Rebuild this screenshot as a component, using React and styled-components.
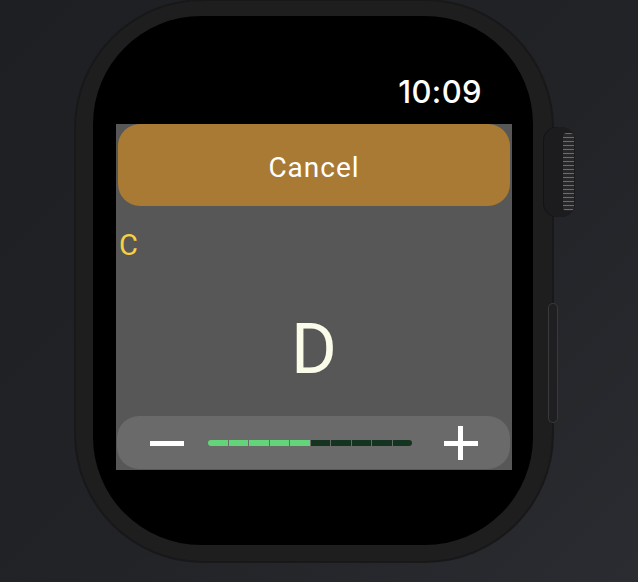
import React from 'react'
import styled, { createGlobalStyle } from 'styled-components'

const GlobalStyle = createGlobalStyle`
  html, body {
    margin: 0;
    padding: 0;
    background: #1f2023;
  }
  body {
    width: 638px;
    height: 582px;
    overflow: hidden;
    background: linear-gradient(135deg, #1e1f22 0%, #222327 55%, #2b2c31 100%);
    font-family: Roboto, "Liberation Sans", sans-serif;
  }
`

const Stage = styled.div`
  width: 638px;
  height: 582px;
  padding-left: 75px;
  box-sizing: border-box;
`

const Watch = styled.div`
  position: relative;
  width: 478px;
  height: 562px;
`

const Case = styled.div`
  width: 100%;
  height: 100%;
  box-sizing: border-box;
  padding: 16px 20px 17px 18px;
  border-radius: 128px;
  background: #1e1e1f;
  box-shadow: inset 0 0 0 1px #18181a, 0 0 0 1px #19191b;
`

const Screen = styled.div`
  width: 440px;
  height: 529px;
  border-radius: 108px;
  background: #000;
  display: flex;
  flex-direction: column;
  overflow: hidden;
`

const StatusBar = styled.div`
  height: 108px;
  display: flex;
  justify-content: flex-end;
  align-items: flex-start;
  padding: 60px 51px 0 0;
  box-sizing: border-box;
`

const Time = styled.span`
  font-family: Inter, Roboto, sans-serif;
  font-weight: 500;
  font-size: 31px;
  line-height: 1;
  color: #ffffff;
  letter-spacing: 0.4px;
`

const Content = styled.div`
  margin-left: 23px;
  width: 396px;
  height: 346px;
  background: #575757;
  display: flex;
  flex-direction: column;
  overflow: hidden;
`

const CancelButton = styled.button`
  margin: 0 2px;
  height: 82px;
  border: none;
  border-radius: 22px;
  background: #a97a34;
  color: #ffffff;
  font-family: Roboto, sans-serif;
  font-size: 28px;
  letter-spacing: 1px;
  padding: 5px 0 0;
  cursor: pointer;
`

const NoteLabel = styled.div`
  margin: 23px 0 0 3px;
  height: 32px;
  font-family: Roboto, sans-serif;
  font-size: 29px;
  line-height: 32px;
  color: ${p => p.color};
`

const BigNote = styled.div`
  flex: 1;
  display: flex;
  justify-content: center;
  align-items: center;
  padding-top: 20px;
  font-family: Roboto, sans-serif;
  font-size: 70px;
  color: #fbfbea;
`

const Controls = styled.div`
  margin: 0 2px 1px 1px;
  height: 53px;
  border-radius: 22px;
  background: #6a6a6a;
  display: flex;
  align-items: center;
  padding-left: 33px;
`

const Meter = styled.div`
  width: 204px;
  height: 6px;
  margin: 0 32px 0 24px;
  display: flex;
  gap: 1px;
  border-radius: 3px;
  overflow: hidden;
`

const Segment = styled.div`
  flex: 1;
  background: ${p => (p.on ? '#63d47a' : '#143420')};
`

const IconButton = styled.div`
  width: 34px;
  height: 34px;
  display: flex;
  align-items: center;
  justify-content: center;
`

const Crown = styled.div`
  position: absolute;
  left: 468px;
  top: 127px;
  width: 32px;
  height: 90px;
  border-radius: 14px;
  background: #1c1c1e;
  box-shadow: inset 1px 0 0 #141415;
  overflow: hidden;
  display: flex;
  justify-content: flex-end;
`

const Ridges = styled.div`
  width: 11px;
  margin: 6px 1px;
  background: repeating-linear-gradient(
    to bottom,
    #7a7a7c 0px,
    #7a7a7c 1.5px,
    #2a2a2c 1.5px,
    #2a2a2c 4px
  );
  border-radius: 4px;
  opacity: 0.85;
`

const SideButton = styled.div`
  position: absolute;
  left: 473px;
  top: 303px;
  width: 10px;
  height: 120px;
  border-radius: 6px;
  background: #1f1f21;
  box-shadow: inset 0 0 0 1px #3a3a3d;
`

const Minus = () => (
  <svg width="34" height="34" viewBox="0 0 34 34">
    <rect x="0" y="15" width="34" height="5" fill="#fff" />
  </svg>
)

const Plus = () => (
  <svg width="34" height="34" viewBox="0 0 34 34">
    <rect x="0" y="15" width="34" height="5" fill="#fff" />
    <rect x="14" y="0" width="5" height="34" fill="#fff" />
  </svg>
)

const segments = Array.from({ length: 10 }, (_, i) => i < 5)

const App = () => {
  return (
    <>
      <GlobalStyle />
      <Stage>
        <Watch>
          <Case>
            <Screen>
              <StatusBar>
                <Time>10:09</Time>
              </StatusBar>
              <Content>
                <CancelButton>Cancel</CancelButton>
                <NoteLabel color="#f6d144">C</NoteLabel>
                <BigNote>D</BigNote>
                <Controls>
                  <IconButton><Minus /></IconButton>
                  <Meter>
                    {segments.map((on, i) => (
                      <Segment key={i} on={on} />
                    ))}
                  </Meter>
                  <IconButton><Plus /></IconButton>
                </Controls>
              </Content>
            </Screen>
          </Case>
          <Crown><Ridges /></Crown>
          <SideButton />
        </Watch>
      </Stage>
    </>
  )
}

export default App
